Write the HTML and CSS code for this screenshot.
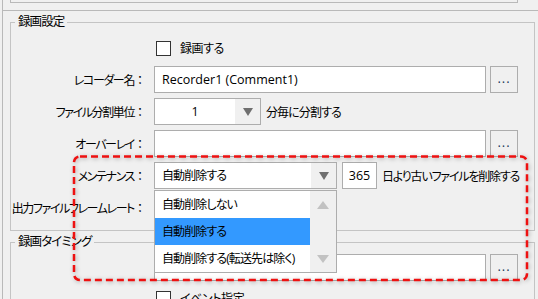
FILE: index.html
```html
<!DOCTYPE html>
<html lang="ja">
<head>
	<meta charset="UTF-8">
	<title>録画設定</title>
	<link rel="stylesheet" href="styles.css">
</head>
<body>
	<div class="window">
		<div class="prev-box"></div>
		<div class="panel">
			<fieldset class="group">
				<legend>録画設定</legend>
				<div class="check-row"><span class="check"></span>録画する</div>
				<div class="row">
					<span class="label">レコーダー名<span class="colon">：</span></span>
					<div class="input">Recorder1 (Comment1)</div>
					<button class="more">...</button>
				</div>
				<div class="row">
					<span class="label">ファイル分割単位<span class="colon">：</span></span>
					<div class="combo split">
						<span class="value center">1</span>
						<span class="arrow"></span>
					</div>
					<span class="after">分毎に分割する</span>
				</div>
				<div class="row">
					<span class="label">オーバーレイ<span class="colon">：</span></span>
					<div class="input"></div>
					<button class="more">...</button>
				</div>
				<div class="row">
					<span class="label">メンテナンス<span class="colon">：</span></span>
					<div class="combo maint">
						<span class="value">自動削除する</span>
						<span class="arrow"></span>
						<div class="dropdown">
							<ul class="items">
								<li>自動削除しない</li>
								<li class="selected">自動削除する</li>
								<li>自動削除する(転送先は除く)</li>
							</ul>
							<div class="scrollbar">
								<span class="up"></span>
								<span class="down"></span>
							</div>
						</div>
					</div>
					<div class="num">365</div>
					<span class="after long">日より古いファイルを削除する</span>
				</div>
				<div class="row">
					<span class="label">出力ファイルフレームレート<span class="colon">：</span></span>
					<div class="combo maint"></div>
				</div>
			</fieldset>
			<fieldset class="group timing">
				<legend>録画タイミング</legend>
				<div class="row">
					<span class="label"></span>
					<div class="input"></div>
					<button class="more">...</button>
				</div>
				<div class="check-row"><span class="check"></span>イベント指定</div>
			</fieldset>
		</div>
	</div>

	<!-- 注目枠 -->
	<svg class="mark" width="458" height="130" viewBox="0 0 458 130">
		<rect x="2" y="2.5" width="453" height="123.5" rx="6" ry="6" fill="none" stroke="#ee1111" stroke-width="2.5" stroke-dasharray="7 4"/>
	</svg>
</body>
</html>
```

FILE: styles.css
```css
body {
	margin: 0;
	background: #f0f0f0;
	font-family: "Open Sans", "Noto Sans CJK JP", sans-serif;
	font-size: 12px;
	font-feature-settings: "palt";
	letter-spacing: -0.9px;
	color: #000;
	height: 299px;
	overflow: hidden;
}

.window {
	margin-left: 2px;
	border-left: 1px solid #b9b9b9;
	height: 299px;
}

.prev-box {
	margin-left: 7px;
	width: 506px;
	height: 2px;
	border: 1px solid #b9b9b9;
	border-top: none;
}

.panel {
	margin-top: 7px;
	border-top: 1px solid #b9b9b9;
}

/* グループ枠 */
.group {
	margin: 3px 3px 0 7px;
	padding: 0 0 9px 0;
	border: 1px solid #c4c4c4;
	min-width: 0;
}

.group legend {
	margin-left: 4px;
	padding: 0 3px;
	line-height: 16px;
	font-size: 12.5px;
	letter-spacing: -0.9px;
}

.timing {
	padding-bottom: 0;
}

.check-row {
	display: flex;
	align-items: center;
	height: 22px;
	margin-top: 7px;
	padding-left: 145px;
	letter-spacing: -0.4px;
}

.check {
	width: 15px;
	height: 15px;
	box-sizing: border-box;
	border: 1px solid #333;
	background: #fff;
	margin-right: 9px;
}

.timing .check-row {
	margin-top: 6px;
}

.row {
	display: flex;
	align-items: center;
	height: 27px;
	margin-top: 5px;
}

.check-row + .row {
	margin-top: 7px;
}

.timing .row {
	margin-top: 4px;
}

.label {
	width: 135px;
	margin-right: 8px;
	text-align: right;
	white-space: nowrap;
	letter-spacing: -1.4px;
}

.colon {
	font-feature-settings: normal;
	letter-spacing: 0;
}

.input {
	width: 332px;
	height: 27px;
	box-sizing: border-box;
	border: 1px solid #adadad;
	background: #fff;
	padding-left: 7px;
	line-height: 25px;
	white-space: nowrap;
	font-size: 12.5px;
	letter-spacing: 0;
}

.more {
	width: 28px;
	height: 27px;
	margin-left: 4px;
	padding: 0 0 4px;
	border: 1px solid #adadad;
	background: #f0f0f0;
	font: inherit;
	font-size: 13px;
	color: #1e3a5a;
	letter-spacing: 1px;
}

/* コンボボックス */
.combo {
	position: relative;
	display: flex;
	height: 27px;
	box-sizing: border-box;
	border: 1px solid #adadad;
	background: #fff;
}

.combo.split {
	width: 107px;
}

.combo.maint {
	width: 183px;
}

.value {
	flex: 1;
	padding-left: 7px;
	line-height: 25px;
}

.value.center {
	padding-left: 0;
	text-align: center;
	font-size: 12.5px;
	letter-spacing: 0;
}

.arrow {
	width: 25px;
	background: #f0f0f0;
	display: flex;
	align-items: center;
	justify-content: center;
}

.arrow::after {
	content: "";
	border-left: 5px solid transparent;
	border-right: 5px solid transparent;
	border-top: 8px solid #6f6f6f;
}

.num {
	width: 35px;
	height: 27px;
	box-sizing: border-box;
	margin-left: 5px;
	border: 1px solid #adadad;
	background: #fff;
	text-align: center;
	line-height: 25px;
	font-size: 12.5px;
	letter-spacing: 0;
}

.after {
	margin-left: 5px;
	white-space: nowrap;
}

.after.long {
	letter-spacing: -1.2px;
}

/* ドロップダウン */
.dropdown {
	position: absolute;
	top: 27px;
	left: -1px;
	width: 183px;
	height: 83px;
	box-sizing: border-box;
	border: 1px solid #adadad;
	background: #fff;
	display: flex;
	z-index: 2;
}

.items {
	list-style: none;
	margin: 0;
	padding: 0;
	flex: 1;
}

.items li {
	height: 27px;
	line-height: 27px;
	padding-left: 7px;
	white-space: nowrap;
}

.items li.selected {
	background: #3399ff;
}

.scrollbar {
	width: 26px;
	background: #f0f0f0;
	display: flex;
	flex-direction: column;
	justify-content: space-between;
	align-items: center;
	padding: 10px 0 9px;
	box-sizing: border-box;
}

.scrollbar .up {
	border-left: 6px solid transparent;
	border-right: 6px solid transparent;
	border-bottom: 8px solid #c2c2c2;
}

.scrollbar .down {
	border-left: 6px solid transparent;
	border-right: 6px solid transparent;
	border-top: 8px solid #c2c2c2;
}

.mark {
	position: absolute;
	left: 72px;
	top: 154px;
	filter: drop-shadow(1px 1px 2px rgba(0, 0, 0, 0.3));
}
```
